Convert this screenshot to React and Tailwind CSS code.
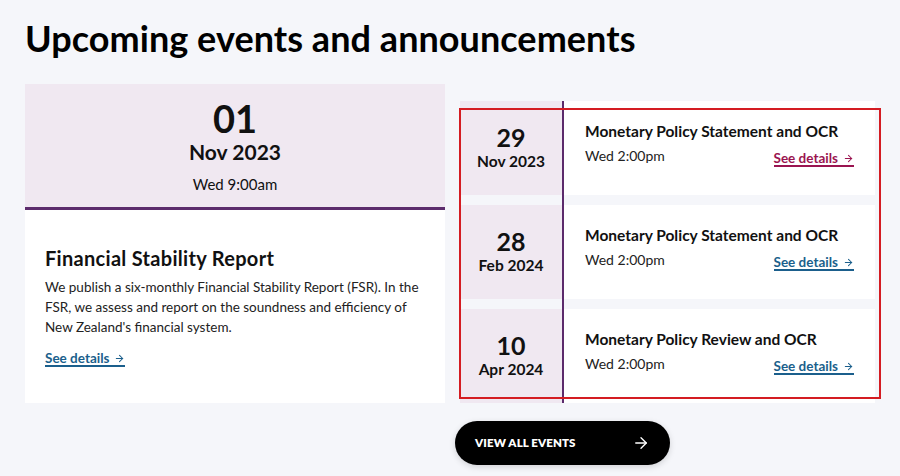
import { ArrowRight } from "lucide-react";

const events = [
  { day: "29", month: "Nov 2023", title: "Monetary Policy Statement and OCR", time: "Wed 2:00pm", accent: true },
  { day: "28", month: "Feb 2024", title: "Monetary Policy Statement and OCR", time: "Wed 2:00pm" },
  { day: "10", month: "Apr 2024", title: "Monetary Policy Review and OCR", time: "Wed 2:00pm" },
];

function SeeDetails({ accent, className = "" }) {
  const color = accent ? "text-[#9a1450] border-[#9a1450]" : "text-[#1b5f8c] border-[#1b5f8c]";
  return (
    <a
      href="#"
      className={`flex items-center gap-[5px] border-b-2 text-[13.5px] font-bold leading-[14px] ${color} ${className}`}
    >
      See details
      <ArrowRight size={11} strokeWidth={2.2} />
    </a>
  );
}

export default function App() {
  return (
    <div
      className="relative min-h-screen bg-[#f5f6fa] pl-[25px] pt-[16px] text-[#111]"
      style={{ fontFamily: "Lato, 'Noto Sans', sans-serif" }}
    >
      <h2 className="text-[36px] font-bold leading-[44px] tracking-[0.05px] text-black">
        Upcoming events and announcements
      </h2>

      <div className="mt-[24px] flex items-start">
        {/* FEATURED CARD */}
        <div className="w-[420px] bg-white">
          <div className="flex h-[123px] flex-col items-center bg-[#f0e8f1] pt-[14px]">
            <div className="text-[38px] font-bold leading-[40px]">01</div>
            <div className="mt-[1px] text-[21px] font-bold leading-[26px]">Nov 2023</div>
            <div className="mt-[9px] text-[15px] leading-[20px]">Wed 9:00am</div>
          </div>
          <div className="h-[3px] bg-[#5c2b6c]" />
          <div className="flex h-[193px] flex-col items-start px-[20px] pt-[35px]">
            <h3 className="text-[20px] font-bold leading-[26px] tracking-[0.3px]">Financial Stability Report</h3>
            <p className="mt-[6px] text-[13.5px] leading-[20px] text-[#222]">
              We publish a six-monthly Financial Stability Report (FSR). In the FSR, we assess and report on the
              soundness and efficiency of New Zealand's financial system.
            </p>
            <SeeDetails className="mt-[14px]" />
          </div>
        </div>

        {/* LIST */}
        <div className="ml-[10px] flex flex-col items-start pt-[17px]">
          <div className="relative ml-[5px] flex w-[415px] flex-col gap-[10px]">
            <div className="absolute bottom-0 left-[102px] top-0 w-[2px] bg-[#5c2b6c]" />
            {events.map((ev) => (
              <div key={ev.day} className="flex h-[94px] bg-white">
                <div className="flex w-[102px] flex-col items-center justify-center bg-[#f0e8f1] pb-[2px]">
                  <div className="text-[25px] font-bold leading-[28px]">{ev.day}</div>
                  <div className="text-[15.5px] font-bold leading-[20px]">{ev.month}</div>
                </div>
                <div className="flex-1 pl-[23px] pr-[21px] pt-[20px]">
                  <div className="text-[15.5px] font-bold leading-[20px]">{ev.title}</div>
                  <div className="mt-[6px] flex items-start justify-between">
                    <span className="text-[14px] leading-[18px] text-[#222]">{ev.time}</span>
                    <SeeDetails accent={ev.accent} className="mt-[4px]" />
                  </div>
                </div>
              </div>
            ))}
          </div>

          <button className="mt-[18px] flex h-[44px] w-[215px] items-center justify-between rounded-full bg-black pl-[20px] pr-[20px] text-white shadow-[0_2px_6px_rgba(0,0,0,0.15)]">
            <span className="text-[11.5px] font-extrabold uppercase tracking-[0.1px]">View all events</span>
            <ArrowRight size={18} strokeWidth={1.8} />
          </button>
        </div>
      </div>

      {/* red highlight overlay */}
      <div className="pointer-events-none absolute left-[459px] top-[108px] h-[291px] w-[422px] border-2 border-[#d41c22]" />
    </div>
  );
}
